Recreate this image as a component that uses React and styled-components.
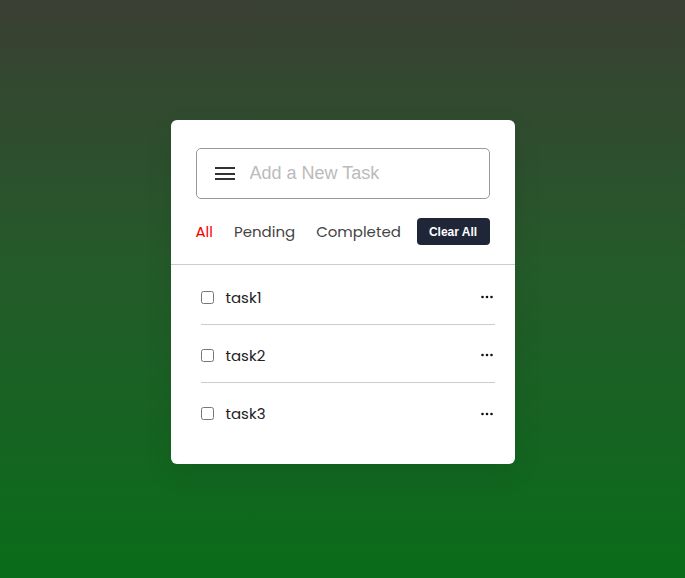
import React, {useState} from 'react'
import styled, {createGlobalStyle} from 'styled-components'

const Global = createGlobalStyle`
  * { box-sizing: border-box; }
  html, body { margin: 0; padding: 0; height: 100%; }
  body {
    font-family: 'Poppins', 'Open Sans', 'Noto Sans', sans-serif;
  }
`

const filters = ['All', 'Pending', 'Completed']

export default function App() {
  const [active, setActive] = useState('All')
  const tasks = [{id: 1, name: 'task1'}, {id: 2, name: 'task2'}, {id: 3, name: 'task3'}]

  return (
    <Page>
      <Global />
      <Card>
        <Controls>
          <InputBox>
            <Burger>
              <span /><span /><span />
            </Burger>
            <TaskInput placeholder="Add a New Task" />
          </InputBox>
          <FilterRow>
            <Filters>
              {filters.map(f => (
                <Filter key={f} active={active === f} onClick={() => setActive(f)}>{f}</Filter>
              ))}
            </Filters>
            <ClearBtn>Clear All</ClearBtn>
          </FilterRow>
        </Controls>
        <TaskList>
          {tasks.map(t => (
            <TaskRow key={t.id}>
              <Label>
                <Check type="checkbox" />
                <span>{t.name}</span>
              </Label>
              <Dots viewBox="0 0 12 4" width="12" height="4">
                <circle cx="1.5" cy="2" r="1.3" />
                <circle cx="6" cy="2" r="1.3" />
                <circle cx="10.5" cy="2" r="1.3" />
              </Dots>
            </TaskRow>
          ))}
        </TaskList>
      </Card>
    </Page>
  )
}

const Page = styled.div`
  width: 100%;
  min-height: 100vh;
  display: flex;
  justify-content: center;
  align-items: flex-start;
  padding-top: 120px;
  background: linear-gradient(to bottom, #3a3f33 0%, #255a2a 45%, #096c1a 100%);
`
const Card = styled.div`
  width: 344px;
  background: #fff;
  border-radius: 6px;
  box-shadow: 0 10px 30px rgba(0,0,0,0.08);
  padding-bottom: 23px;
`
const Controls = styled.div`
  padding: 28px 25px 19px;
  border-bottom: 1px solid #ccc;
`
const InputBox = styled.div`
  height: 51px;
  border: 1px solid #999;
  border-radius: 5px;
  display: flex;
  align-items: center;
  padding-left: 18px;
`
const Burger = styled.div`
  width: 20px;
  display: flex;
  flex-direction: column;
  gap: 3.5px;
  margin-right: 13px;
  span {
    display: block;
    height: 2px;
    background: #333;
  }
`
const TaskInput = styled.input`
  border: none;
  outline: none;
  flex: 1;
  font-family: 'Liberation Sans', Arial, sans-serif;
  font-size: 18px;
  color: #333;
  &::placeholder { color: #bbb; }
`
const FilterRow = styled.div`
  margin-top: 19px;
  display: flex;
  justify-content: space-between;
  align-items: center;
`
const Filters = styled.div`
  display: flex;
  gap: 21px;
`
const Filter = styled.span`
  font-size: 15px;
  color: ${p => p.active ? '#f00' : '#444'};
  cursor: pointer;
`
const ClearBtn = styled.button`
  width: 73px;
  height: 27px;
  border: none;
  border-radius: 4px;
  background: #1e2638;
  color: #fff;
  font-family: 'Liberation Sans', Arial, sans-serif;
  font-weight: bold;
  font-size: 12px;
  cursor: pointer;
`
const TaskList = styled.ul`
  list-style: none;
  margin: 0;
  padding: 2px 20px 0 30px;
`
const TaskRow = styled.li`
  height: 58px;
  padding-top: 3px;
  display: flex;
  align-items: center;
  justify-content: space-between;
  border-bottom: 1px solid #ccc;
  &:last-child { border-bottom: none; }
`
const Label = styled.label`
  display: flex;
  align-items: center;
  font-size: 15px;
  color: #222;
`
const Check = styled.input`
  width: 13px;
  height: 13px;
  margin: 0 12px 0 0;
`
const Dots = styled.svg`
  fill: #111;
  margin-right: 2px;
`
